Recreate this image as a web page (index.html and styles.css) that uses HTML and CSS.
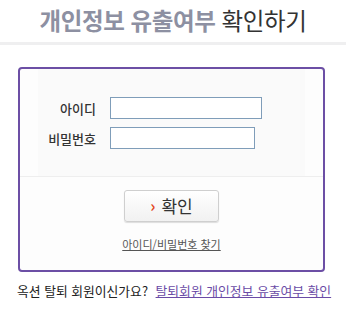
FILE: index.html
```html
<!DOCTYPE html>
<html lang="ko">
<head>
<meta charset="utf-8">
<link rel="stylesheet" href="styles.css">
</head>
<body>
<div class="page">
  <h1 class="title"><span class="hl">개인정보 유출여부</span> 확인하기</h1>
  <div class="rule"></div>
  <div class="box">
    <div class="top">
      <div class="fields">
        <label class="lbl" for="uid">아이디</label>
        <input class="inp inp-id" id="uid" type="text">
        <label class="lbl" for="upw">비밀번호</label>
        <input class="inp inp-pw" id="upw" type="password">
      </div>
    </div>
    <div class="actions">
      <button class="btn" type="button"><span class="arrow">›</span>확인</button>
      <a class="find" href="#">아이디/비밀번호 찾기</a>
    </div>
  </div>
  <p class="note">옥션 탈퇴 회원이신가요? <a class="note-link" href="#">탈퇴회원 개인정보 유출여부 확인</a></p>
</div>
</body>
</html>
```

FILE: styles.css
```css
html, body {
  margin: 0;
  padding: 0;
  background: #fff;
}
body {
  font-family: "Noto Sans CJK KR", "Noto Sans", sans-serif;
  color: #333;
  width: 346px;
  height: 309px;
  overflow: hidden;
}
.page {
  display: flex;
  flex-direction: column;
}
.title {
  margin: 0;
  height: 42px;
  display: flex;
  align-items: center;
  justify-content: center;
  font-size: 23.5px;
  font-weight: 400;
  letter-spacing: -0.4px;
  color: #333;
  white-space: pre;
  line-height: 1;
  padding-left: 0;
}
.title .hl {
  color: #8d90a2;
  font-weight: 700;
}
.rule {
  height: 3px;
  background: #efeff0;
}
.box {
  margin: 22px 0 0 18px;
  width: 303px;
  border: 2px solid #6c4fa5;
  border-radius: 4px;
  background: #fdfdfd;
}
.top {
  border-bottom: 1px solid #eeeeee;
  padding: 0 18px;
}
.fields {
  display: grid;
  grid-template-columns: 58px auto;
  column-gap: 14px;
  row-gap: 8px;
  align-items: center;
  padding: 28px 0 27px 0;
  background: #fafafa;
}
.lbl {
  justify-self: end;
  font-size: 13px;
  color: #333;
  font-weight: 500;
  white-space: nowrap;
}
.inp {
  box-sizing: border-box;
  height: 22px;
  border: 1px solid #7f9db9;
  background: #fff;
  margin: 0;
  padding: 0 3px;
}
.inp-id { width: 152px; }
.inp-pw { width: 145px; }
.actions {
  display: flex;
  flex-direction: column;
  align-items: center;
  padding: 13px 0 18px 0;
}
.btn {
  width: 95px;
  height: 32px;
  border: 1px solid #cfcfcf;
  border-radius: 3px;
  background: linear-gradient(#ffffff, #f1f1f1);
  box-shadow: 0 1px 1px #ddd;
  font-family: inherit;
  font-size: 17px;
  color: #333;
  display: flex;
  align-items: center;
  justify-content: center;
  gap: 6px;
  padding: 0 0 2px 0;
}
.arrow {
  color: #e3461a;
  font-weight: 700;
  font-size: 16px;
}
.find {
  margin-top: 14px;
  font-size: 11px;
  color: #555;
  text-decoration: underline;
}
.note {
  margin: 9px 0 0 17px;
  font-size: 12.8px;
  color: #222;
  white-space: nowrap;
}
.note-link {
  margin-left: 4px;
  color: #6a4ba6;
  text-decoration: underline;
}
```
